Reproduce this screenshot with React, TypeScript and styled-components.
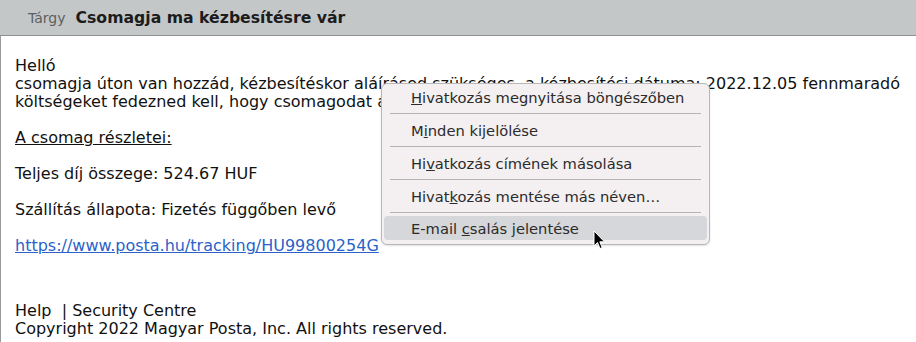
import React from 'react';
import styled, { createGlobalStyle } from 'styled-components';

const GlobalStyle = createGlobalStyle`
  html, body {
    margin: 0;
    padding: 0;
    background: #ffffff;
  }
  body {
    font-family: "DejaVu Sans", "Noto Sans", sans-serif;
    overflow: hidden;
  }
`;

const Window = styled.div`
  position: relative;
  width: 916px;
  height: 342px;
  overflow: hidden;
  background: #ffffff;
`;

const Header = styled.div`
  height: 35px;
  display: flex;
  align-items: center;
  gap: 10px;
  padding-left: 28px;
  background: #c4c7c8;
  border-bottom: 1px solid #8e9193;
`;

const HeaderLabel = styled.span`
  font-size: 14px;
  color: #5d5f60;
`;

const HeaderSubject = styled.span`
  font-size: 15.7px;
  font-weight: bold;
  color: #1c1c1c;
`;

const MessageBody = styled.div`
  height: 306px;
  box-sizing: border-box;
  border-left: 1px solid #9b9b9b;
  padding: 21px 0 0 14px;
  font-size: 16px;
  line-height: 18px;
  color: #111111;
`;

const Para = styled.p<{ $gap?: number }>`
  margin: 0 0 ${p => (p.$gap ?? 18)}px 0;
  white-space: nowrap;
`;

const Underlined = styled.span`
  text-decoration: underline;
`;

const Link = styled.a`
  color: #2a62c9;
  text-decoration: underline;
`;

const Menu = styled.div`
  position: absolute;
  left: 381px;
  top: 83px;
  width: 323px;
  padding: 0 2px 4px;
  background: #f4eff0;
  border: 1px solid #b7b7b7;
  border-radius: 6px;
  box-shadow: 0 1px 2px rgba(0, 0, 0, 0.12);
  font-size: 14.7px;
  color: #2b2b2b;
`;

const MenuItem = styled.div<{ $active?: boolean }>`
  display: flex;
  align-items: center;
  padding-left: 27px;
  border-radius: 4px;
  background: ${p => (p.$active ? '#d6d7da' : 'transparent')};
  margin-top: ${p => (p.$active ? '1px' : '0')};
  height: ${p => (p.$active ? '24px' : '26px')};
`;

const Separator = styled.div`
  height: 1px;
  margin: 3px 6px;
  background: #b4b4b4;
`;

const Pointer = styled.svg`
  position: absolute;
  left: 593px;
  top: 230px;
`;

export default function App() {
  return (
    <Window>
      <GlobalStyle />
      <Header>
        <HeaderLabel>Tárgy</HeaderLabel>
        <HeaderSubject>Csomagja ma kézbesítésre vár</HeaderSubject>
      </Header>
      <MessageBody>
        <Para>
          Helló
          <br />
          csomagja úton van hozzád, kézbesítéskor aláírásod szükséges, a kézbesítési dátuma: 2022.12.05 fennmaradó
          <br />
          költségeket fedezned kell, hogy csomagodat átvehesd.
        </Para>
        <Para>
          <Underlined>A csomag részletei:</Underlined>
        </Para>
        <Para>Teljes díj összege: 524.67 HUF</Para>
        <Para>Szállítás állapota: Fizetés függőben levő</Para>
        <Para $gap={47}>
          <Link href="#">https://www.posta.hu/tracking/HU99800254G</Link>
        </Para>
        <Para $gap={0}>
          Help&nbsp; | Security Centre
          <br />
          Copyright 2022 Magyar Posta, Inc. All rights reserved.
        </Para>
      </MessageBody>
      <Menu>
        <MenuItem>
          <span><u>H</u>ivatkozás megnyitása böngészőben</span>
        </MenuItem>
        <Separator />
        <MenuItem>
          <span>M<u>i</u>nden kijelölése</span>
        </MenuItem>
        <Separator />
        <MenuItem>
          <span>Hi<u>v</u>atkozás címének másolása</span>
        </MenuItem>
        <Separator />
        <MenuItem>
          <span>Hivat<u>k</u>ozás mentése más néven…</span>
        </MenuItem>
        <Separator />
        <MenuItem $active>
          <span>E-mail <u>c</u>salás jelentése</span>
        </MenuItem>
      </Menu>
      <Pointer width="14" height="21" viewBox="0 0 14 21">
        <path
          d="M1 1 L1 16 L4.5 12.5 L7 18.5 L9.2 17.6 L6.8 11.8 L11.5 11.8 Z"
          fill="#000000"
          stroke="#ffffff"
          strokeWidth="1"
          strokeLinejoin="round"
        />
      </Pointer>
    </Window>
  );
}
